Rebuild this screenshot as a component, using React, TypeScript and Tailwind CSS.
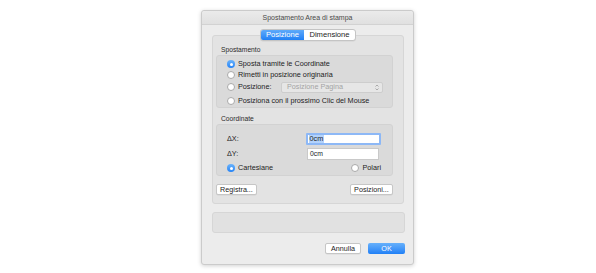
import React from 'react';

const Radio: React.FC<{ checked?: boolean }> = ({ checked }) =>
    checked ? (
        <span className="flex items-center justify-center w-[8px] h-[8px] rounded-full bg-gradient-to-b from-[#6ab3fb] to-[#2383f6] shrink-0">
            <span className="w-[3px] h-[3px] rounded-full bg-white" />
        </span>
    ) : (
        <span className="w-[8px] h-[8px] rounded-full bg-white border border-[#a9a9a9] shrink-0" />
    );

const SmallButton: React.FC<{ label: string; width: string }> = ({ label, width }) => (
    <button className={`${width} h-[11px] flex items-center justify-center bg-white border border-[#c6c6c6] rounded-[2px] text-[7.2px] leading-none text-[#1d1d1d] shadow-[0_0.5px_0_rgba(0,0,0,0.08)]`}>
        {label}
    </button>
);

export default function App() {
    return (
        <div
            className="w-[596px] h-[273px] bg-white pt-[10px] pl-[201px]"
            style={{ fontFamily: '"Liberation Sans", Arial, sans-serif' }}
        >
            <div className="w-[213px] h-[255px] flex flex-col bg-[#ececec] border border-[#cbcbcb] rounded-[3px] shadow-[0_1px_4px_rgba(0,0,0,0.18)]">
                {/* Title bar */}
                <div className="h-[14px] bg-gradient-to-b from-[#ebebeb] to-[#e0e0e0] border-b border-[#d2d2d2] rounded-t-[3px] text-center text-[7px] leading-[13px] text-[#4a4a4a]">
                    Spostamento Area di stampa
                </div>

                <div className="pl-[10px] flex flex-col">
                    {/* Tabs */}
                    <div className="relative z-10 mt-[4px] w-[192px] flex justify-center">
                        <div className="flex h-[12px] bg-white border border-[#c4c4c4] rounded-[3px] overflow-hidden shadow-[0_0.5px_0_rgba(0,0,0,0.08)]">
                            <div className="w-[43px] flex items-center justify-center bg-gradient-to-b from-[#5eaafa] to-[#1f80f5] text-white text-[7.6px] leading-none">
                                Posizione
                            </div>
                            <div className="w-[51px] flex items-center justify-center text-[#1d1d1d] text-[7.6px] leading-none">
                                Dimensione
                            </div>
                        </div>
                    </div>

                    {/* Tab panel */}
                    <div className="-mt-[6px] w-[192px] h-[169px] bg-[#e3e3e3] border border-[#d6d6d6] rounded-[3px] pt-[9px] pl-[3px]">
                        <div className="h-[10px] pl-[5px] text-[6.7px] leading-[10px] text-[#2a2a2a]">Spostamento</div>
                        <div className="w-[177px] h-[53px] bg-[#dadada] border border-[#d2d2d2] rounded-[3px] pt-[3px] pl-[10px] text-[7.25px] text-[#1d1d1d]">
                            <div className="h-[10px] flex items-center gap-[3px]">
                                <Radio checked />
                                <span>Sposta tramite le Coordinate</span>
                            </div>
                            <div className="h-[10px] mt-[1px] flex items-center gap-[3px]">
                                <Radio />
                                <span>Rimetti in posizione originaria</span>
                            </div>
                            <div className="h-[12px] mt-[1px] flex items-center gap-[3px]">
                                <Radio />
                                <span className="w-[40px]">Posizione:</span>
                                <div className="w-[102px] h-[11px] flex items-center justify-between pl-[5px] pr-[3px] bg-[#e6e6e6] border border-[#cdcdcd] rounded-[2px] text-[#a4a4a4]">
                                    <span>Posizione Pagina</span>
                                    <svg width="4" height="7" viewBox="0 0 4 7" fill="none" stroke="#9a9a9a" strokeWidth="0.8">
                                        <path d="M0.5 2.5 L2 1 L3.5 2.5" />
                                        <path d="M0.5 4.5 L2 6 L3.5 4.5" />
                                    </svg>
                                </div>
                            </div>
                            <div className="h-[10px] mt-[3px] flex items-center gap-[3px]">
                                <Radio />
                                <span>Posiziona con il prossimo Clic del Mouse</span>
                            </div>
                        </div>

                        <div className="h-[10px] mt-[6px] pl-[5px] text-[6.7px] leading-[10px] text-[#2a2a2a]">Coordinate</div>
                        <div className="w-[177px] h-[52px] bg-[#dadada] border border-[#d2d2d2] rounded-[3px] pt-[8px] pl-[10px] pr-[11px] text-[7.25px] text-[#1d1d1d]">
                            <div className="h-[12px] flex items-center">
                                <span className="w-[79px]">ΔX:</span>
                                <div className="w-[75px] h-[12px] flex items-center bg-white border-2 border-[#8db8f6] rounded-[1px] pl-[1px]">
                                    <span className="bg-[#b4d3fb] leading-[8px] px-[0.5px]">0cm</span>
                                </div>
                            </div>
                            <div className="h-[12px] mt-[3px] flex items-center">
                                <span className="w-[80px]">ΔY:</span>
                                <div className="w-[72px] h-[12px] flex items-center bg-white border border-[#c9c9c9] pl-[2px] text-[6.8px]">
                                    0cm
                                </div>
                            </div>
                            <div className="h-[10px] mt-[3px] flex items-center justify-between">
                                <div className="flex items-center gap-[3px]">
                                    <Radio checked />
                                    <span>Cartesiane</span>
                                </div>
                                <div className="flex items-center gap-[3px]">
                                    <Radio />
                                    <span>Polari</span>
                                </div>
                            </div>
                        </div>

                        <div className="w-[177px] mt-[8px] flex justify-between">
                            <SmallButton label="Registra..." width="w-[41px]" />
                            <SmallButton label="Posizioni..." width="w-[43px]" />
                        </div>
                    </div>

                    {/* Empty info box */}
                    <div className="mt-[8px] w-[193px] h-[21px] bg-[#e1e1e1] border border-[#d6d6d6] rounded-[3px]" />

                    {/* Dialog buttons */}
                    <div className="mt-[10px] w-[193px] flex justify-end gap-[7px]">
                        <SmallButton label="Annulla" width="w-[36px]" />
                        <button className="w-[37px] h-[11px] flex items-center justify-center rounded-[2px] bg-gradient-to-b from-[#66b0fb] to-[#1f80f6] text-white text-[7.2px] leading-none">
                            OK
                        </button>
                    </div>
                </div>
            </div>
        </div>
    );
}
